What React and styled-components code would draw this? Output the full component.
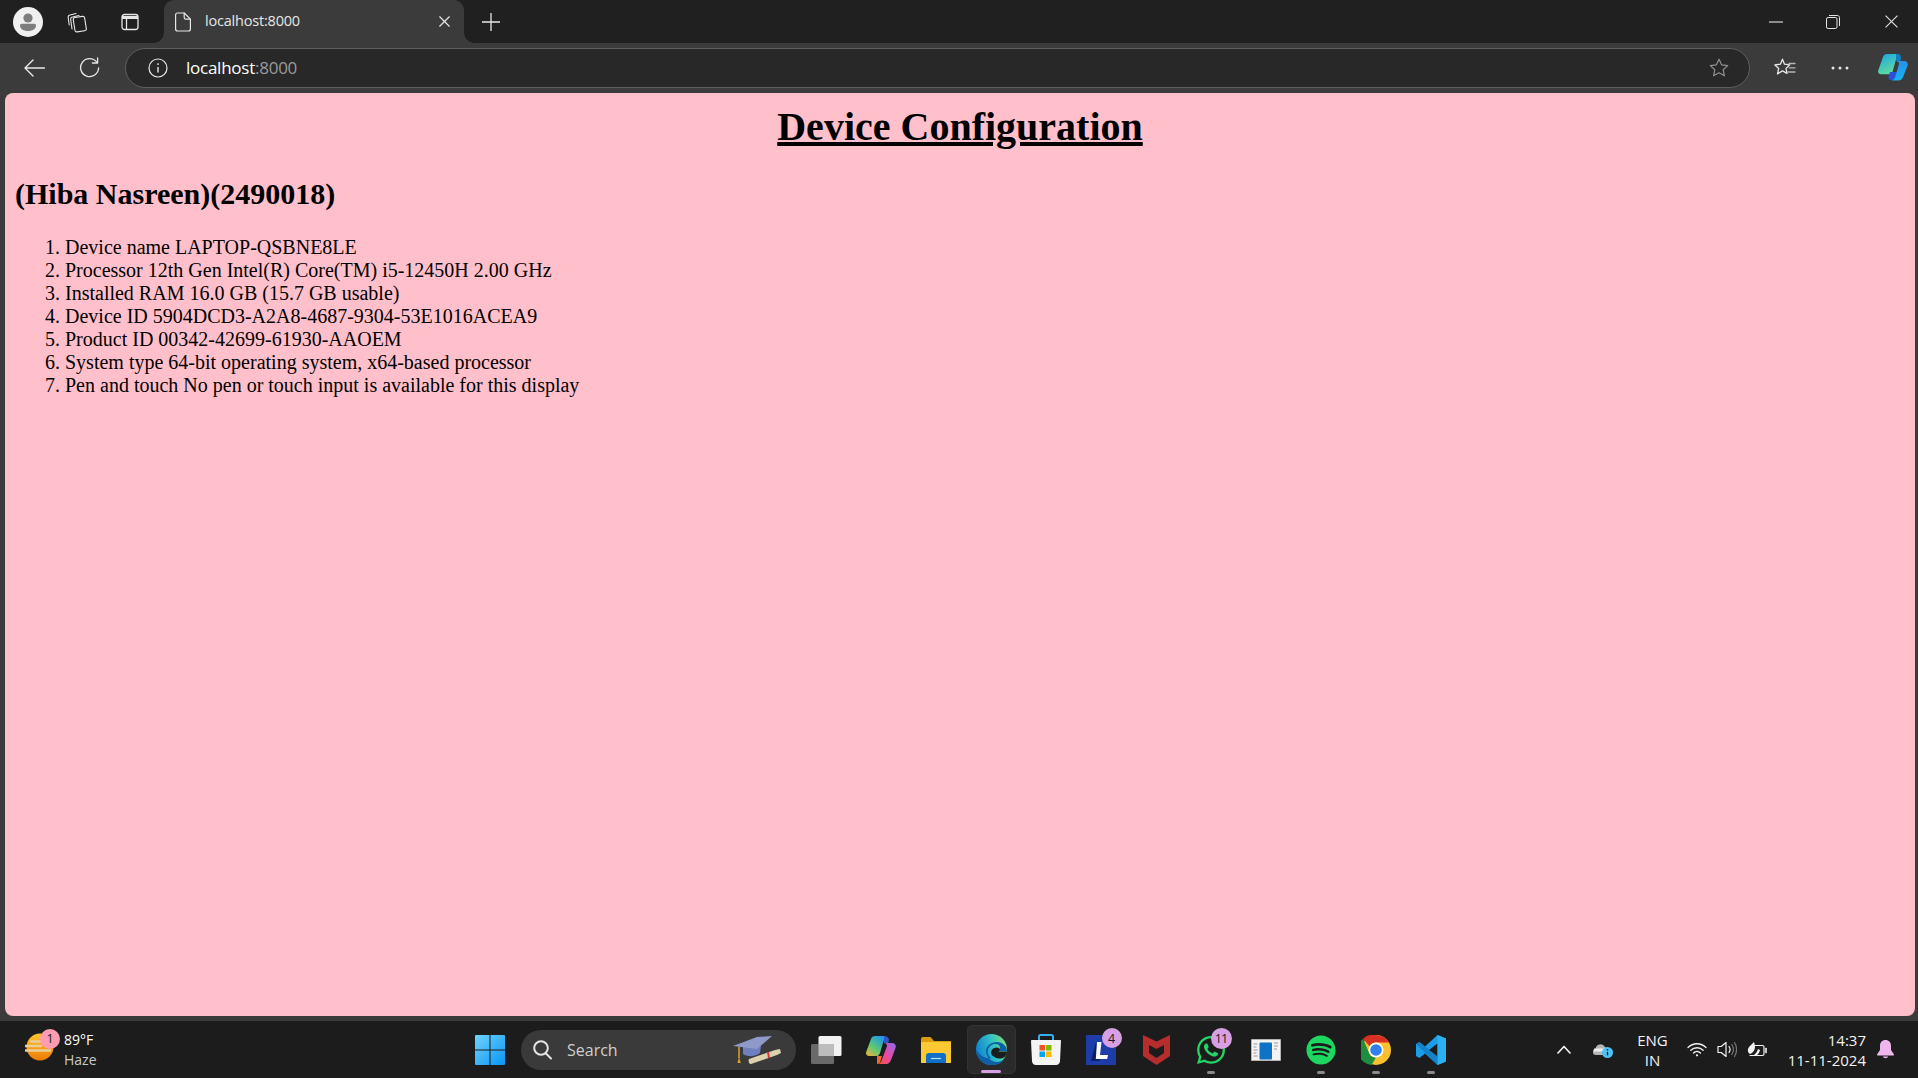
import React from "react";
import styled, { createGlobalStyle } from "styled-components";
import { FaWhatsapp, FaSpotify } from "react-icons/fa";

const GlobalStyle = createGlobalStyle`
  html, body {
    margin: 0;
    padding: 0;
    height: 100%;
    overflow: hidden;
    background: #3b3b3b;
  }
  #root {
    height: 100%;
  }
`;

const Screen = styled.div`
  width: 1918px;
  height: 1078px;
  display: flex;
  flex-direction: column;
  font-family: "Open Sans", "Noto Sans", sans-serif;
  color: #fff;
`;

const TitleBar = styled.div`
  height: 43px;
  flex: none;
  background: #202020;
  display: flex;
  align-items: center;
`;

const ChromeSlot = styled.div`
  width: ${(p) => p.$w || 53}px;
  height: 43px;
  flex: none;
  display: flex;
  align-items: center;
  justify-content: center;
`;

const Tab = styled.div`
  position: relative;
  width: 300px;
  height: 43px;
  margin-left: 3px;
  flex: none;
  background: #3b3b3b;
  border-radius: 10px 10px 0 0;
  display: flex;
  align-items: center;
  padding: 0 14px 0 11px;
  box-sizing: border-box;
  font-size: 14.5px;
  letter-spacing: -0.2px;
  color: #e6e6e6;

  &::before,
  &::after {
    content: "";
    position: absolute;
    bottom: 0;
    width: 10px;
    height: 10px;
  }
  &::before {
    left: -10px;
    background: radial-gradient(circle at 0 0, #202020 9.5px, #3b3b3b 10px);
  }
  &::after {
    right: -10px;
    background: radial-gradient(circle at 100% 0, #202020 9.5px, #3b3b3b 10px);
  }
`;

const TabTitle = styled.span`
  flex: 1;
  margin-left: 13px;
  padding-bottom: 3px;
`;

const WindowControls = styled.div`
  margin-left: auto;
  display: flex;
`;

const ControlSlot = styled.div`
  width: ${(p) => p.$w || 57}px;
  height: 43px;
  margin-left: ${(p) => p.$ml || 0}px;
  display: flex;
  align-items: center;
  justify-content: center;
`;

const ToolBar = styled.div`
  height: 50px;
  flex: none;
  background: #3b3b3b;
  display: flex;
  align-items: center;
  padding-left: 7px;
  padding-bottom: 1px;
  box-sizing: border-box;
`;

const ToolSlot = styled.div`
  width: ${(p) => p.$w || 55}px;
  height: 40px;
  flex: none;
  display: flex;
  align-items: center;
  justify-content: center;
`;

const UrlBar = styled.div`
  width: 1625px;
  height: 40px;
  margin-left: 8px;
  margin-right: 7px;
  flex: none;
  box-sizing: border-box;
  background: #282828;
  border: 1px solid #5f5f5f;
  border-radius: 20px;
  display: flex;
  align-items: center;
  padding: 0 20px 0 22px;
`;

const UrlText = styled.div`
  flex: 1;
  margin-left: 18px;
  font-size: 17px;
  letter-spacing: -0.25px;
  color: #fff;

  span {
    color: #9a9a9a;
  }
`;

const PageFrame = styled.div`
  flex: 1;
  min-height: 0;
  padding: 0 3px 5px 5px;
  background: #3b3b3b;
  display: flex;
`;

const Page = styled.main`
  flex: 1;
  background: #ffc0cb;
  border-radius: 8px;
  padding: 11px 10px 10px;
  font-family: "Liberation Serif", "Times New Roman", serif;
  font-size: 20px;
  line-height: 23px;
  color: #000;
`;

const Title = styled.h1`
  margin: 0;
  font-size: 40px;
  line-height: 46px;
  font-weight: bold;
  text-align: center;
  text-decoration: underline;
`;

const Owner = styled.h2`
  margin: 27px 0 25px;
  font-size: 30px;
  line-height: 34px;
  font-weight: bold;
`;

const SpecList = styled.ol`
  margin: 0;
  padding-left: 50px;
`;

const TaskBar = styled.footer`
  height: 57px;
  flex: none;
  background: #1c1c1c;
  display: flex;
  align-items: center;
  position: relative;
`;

const Weather = styled.div`
  width: 462px;
  flex: none;
  display: flex;
  align-items: center;
  padding-left: 25px;
  box-sizing: border-box;
`;

const WeatherIcon = styled.div`
  position: relative;
  width: 34px;
  height: 36px;
  flex: none;
`;

const CountBadge = styled.span`
  position: absolute;
  top: ${(p) => p.$top}px;
  right: ${(p) => p.$right}px;
  width: ${(p) => p.$size}px;
  height: ${(p) => p.$size}px;
  border-radius: 50%;
  background: ${(p) => p.$bg};
  color: #1a1a1a;
  font-size: 12.5px;
  letter-spacing: ${(p) => p.$spacing || 0}px;
  display: flex;
  align-items: center;
  justify-content: center;
`;

const WeatherText = styled.div`
  margin-left: 5px;
  font-size: 14px;
  line-height: 20px;
  color: #fff;

  small {
    display: block;
    font-size: 14px;
    color: #c9c9c9;
  }
`;

const StartSlot = styled.div`
  width: 55px;
  height: 48px;
  flex: none;
  display: flex;
  align-items: center;
  justify-content: center;
`;

const SearchBox = styled.div`
  width: 275px;
  height: 40px;
  margin-left: 4px;
  flex: none;
  background: #3a3a3a;
  border-radius: 20px;
  box-sizing: border-box;
  display: flex;
  align-items: center;
  padding: 0 15px 0 12px;
  font-size: 16px;
  color: #cfcfcf;
`;

const SearchLabel = styled.span`
  flex: 1;
  margin-left: 15px;
`;

const AppRow = styled.div`
  display: flex;
  margin-left: 2.5px;
`;

const AppSlot = styled.div`
  position: relative;
  width: 55px;
  height: 49px;
  flex: none;
  display: flex;
  align-items: center;
  justify-content: center;
  border-radius: 5px;
  box-sizing: border-box;
  background: ${(p) => (p.$active ? "#2a2a2a" : "transparent")};
  ${(p) => (p.$active ? "border: 1px solid #333; margin: 0 3px; width: 49px;" : "")}
`;

const RunningDot = styled.span`
  position: absolute;
  bottom: 0;
  left: 50%;
  transform: translateX(-50%);
  width: ${(p) => (p.$active ? 20 : 8)}px;
  height: 3px;
  border-radius: 2px;
  background: ${(p) => (p.$active ? "#d8a0e4" : "#8b8b8b")};
`;

const Tray = styled.div`
  margin-left: auto;
  display: flex;
  align-items: center;
  height: 100%;
`;

const TraySlot = styled.div`
  width: ${(p) => p.$w}px;
  flex: none;
  display: flex;
  align-items: center;
  justify-content: center;
`;

const TrayText = styled.div`
  font-size: 15px;
  line-height: 20px;
  text-align: ${(p) => p.$align || "center"};
  color: #f2f2f2;
  flex: none;
  width: ${(p) => p.$w}px;
`;

const line = { fill: "none", stroke: "currentColor", strokeLinecap: "round", strokeLinejoin: "round" };

const Profile = () => (
  <svg width="30" height="30" viewBox="0 0 30 30">
    <circle cx="15" cy="15" r="15" fill="#f0f0f0" />
    <circle cx="15" cy="11" r="4.6" fill="#7d7d7d" />
    <path d="M7 18.5c0-1 .8-1.8 1.8-1.8h12.4c1 0 1.8.8 1.8 1.8 0 3.4-3.4 5.5-8 5.5s-8-2.1-8-5.5z" fill="#7d7d7d" />
  </svg>
);

const Collections = () => (
  <svg width="22" height="22" viewBox="0 0 22 22" {...line} color="#e6e6e6" strokeWidth="1.1">
    <rect x="8" y="6" width="11.5" height="14.5" rx="2" transform="rotate(-9 13 13)" />
    <path d="M6 18 4.700 8.500c-.2-1.200.6-2.300 1.800-2.500l6.500-1.500" />
    <path d="M3.200 14 2.200 6.500C2 5.300 2.800 4.200 4 4l6-1.500" />
  </svg>
);

const TabLayout = () => (
  <svg width="18" height="18" viewBox="0 0 18 18" fill="none" stroke="#e6e6e6" strokeWidth="1.3">
    <rect x="1" y="1.5" width="16" height="15" rx="2.5" />
    <path d="M1 4.5h16" strokeWidth="3" />
    <path d="M5.5 5v11" />
  </svg>
);

const FileIcon = () => (
  <svg width="17" height="20" viewBox="0 0 17 20" {...line} color="#e6e6e6" strokeWidth="1.2">
    <path d="M2.6 1h6.6l6.2 6.2v9.8c0 1.1-.9 2-2 2H2.6c-1.1 0-2-.9-2-2V3c0-1.1.9-2 2-2z" />
    <path d="M9.2 1v4.4c0 1 .8 1.8 1.8 1.8h4.4" />
  </svg>
);

const Cross = ({ size = 12, width = 1.3, color = "#e6e6e6" }) => (
  <svg width={size} height={size} viewBox="0 0 12 12" fill="none" stroke={color} strokeWidth={width}>
    <path d="M.5.5l11 11M11.5.5l-11 11" />
  </svg>
);

const Plus = () => (
  <svg width="18" height="18" viewBox="0 0 18 18" fill="none" stroke="#e6e6e6" strokeWidth="1.3">
    <path d="M9 0v18M0 9h18" />
  </svg>
);

const Minimize = () => (
  <svg width="14" height="2" viewBox="0 0 14 2">
    <path d="M0 1h14" stroke="#e6e6e6" strokeWidth="1.1" />
  </svg>
);

const Restore = () => (
  <svg width="14" height="14" viewBox="0 0 14 14" fill="none" stroke="#e6e6e6" strokeWidth="1">
    <rect x=".5" y="2.5" width="10.5" height="11" rx="1.6" />
    <path d="M3 .5h8.4c1.2 0 2.1.9 2.1 2.1V11" />
  </svg>
);

const Back = () => (
  <svg width="21" height="18" viewBox="0 0 21 18" {...line} color="#e8e8e8" strokeWidth="1.4">
    <path d="M1 9h19.5M9 1 1 9l8 8" />
  </svg>
);

const Reload = () => (
  <svg width="21" height="21" viewBox="0 0 21 21" {...line} color="#e8e8e8" strokeWidth="1.3">
    <path d="M17.8 5.2A9 9 0 1 0 19.6 11" />
    <path d="M18.6 .8v5.2h-5.2" />
  </svg>
);

const Info = () => (
  <svg width="20" height="20" viewBox="0 0 20 20" fill="none" stroke="#e8e8e8" strokeWidth="1.2">
    <circle cx="10" cy="10" r="9" />
    <path d="M10 9v5.4" strokeWidth="1.4" />
    <circle cx="10" cy="6.1" r=".9" fill="#e8e8e8" stroke="none" />
  </svg>
);

const Star = () => (
  <svg width="20" height="20" viewBox="0 0 20 20" {...line} color="#909090" strokeWidth="1.2">
    <path d="M10 1.2l2.6 5.6 6.1.8-4.5 4.2 1.2 6-5.4-3-5.4 3 1.2-6L1.300 7.600l6.100-.8z" />
  </svg>
);

const Favorites = () => (
  <svg width="22" height="20" viewBox="0 0 22 20" {...line} color="#e8e8e8" strokeWidth="1.3">
    <path d="M8.500 1.200l2 5 5.300.6-3.800 3.600 1 5-4.500-2.500-5 3 1.200-5.500L.900 6.900l5.500-.7z" />
    <path d="M15 5.500h6M15 9.800h6M14 14h7" stroke="#b5b5b5" />
  </svg>
);

const Dots = () => (
  <svg width="18" height="4" viewBox="0 0 18 4" fill="#e8e8e8">
    <circle cx="2" cy="2" r="1.500" />
    <circle cx="9" cy="2" r="1.500" />
    <circle cx="16" cy="2" r="1.500" />
  </svg>
);

const CopilotEdge = () => (
  <svg width="30" height="27" viewBox="0 0 30 27">
    <defs>
      <linearGradient id="ceA" x1="0" y1="0" x2="0.4" y2="1">
        <stop offset="0" stopColor="#1aa6e8" />
        <stop offset="1" stopColor="#5ed8a0" />
      </linearGradient>
      <linearGradient id="ceB" x1="0.5" y1="0" x2="0.5" y2="1">
        <stop offset="0" stopColor="#2a8fe8" />
        <stop offset="1" stopColor="#16b4ee" />
      </linearGradient>
    </defs>
    <path d="M9 0h10.500l-5 18c-.4 1.300-1.500 2.200-2.900 2.200H3C.9 20.200-.5 18.400.2 16.400L5 3C5.600 1.200 7.100 0 9 0z" fill="url(#ceA)" />
    <path d="M12 18l-1.500 4.500C10 24.500 11.500 26 13 26h4l2-8z" fill="#2a4fd8" />
    <path d="M18 7h8c3 0 4.500 2.500 3.500 5l-4.500 11c-.8 2-2.300 3.500-4.500 3.500H13c2.300 0 3.600-1.600 4.200-3.500L21 10c.3-1.200-1-3-3-3z" fill="url(#ceB)" />
    <path d="M18 0h1.500c2.300 0 3.600 1.400 3.500 3.500L22.500 7H18z" fill="#0f7fbd" />
  </svg>
);

const WeatherGlyph = () => (
  <svg width="30" height="30" viewBox="0 0 30 30">
    <defs>
      <linearGradient id="sun" x1="0" y1="0" x2="0" y2="1">
        <stop offset="0" stopColor="#ffc42e" />
        <stop offset="1" stopColor="#ee7b06" />
      </linearGradient>
    </defs>
    <circle cx="15" cy="15" r="13.500" fill="url(#sun)" />
    <g stroke="#e8cf9a" strokeWidth="2.400" strokeLinecap="round">
      <path d="M6 9.500h21M0 14h16M21 14h6M0 18.500h25" />
    </g>
  </svg>
);

const WinLogo = () => (
  <svg width="30" height="30" viewBox="0 0 30 30">
    <defs>
      <linearGradient id="win" x1="0" y1="0" x2="1" y2="1">
        <stop offset="0" stopColor="#6fd3ff" />
        <stop offset="1" stopColor="#0a94f5" />
      </linearGradient>
    </defs>
    <path d="M1 0h13.500v14.500H0V1a1 1 0 0 1 1-1zM15.500 0H29a1 1 0 0 1 1 1v13.500H15.500zM0 15.500h14.500V30H1a1 1 0 0 1-1-1zM15.500 15.500H30V29a1 1 0 0 1-1 1H15.500z" fill="url(#win)" />
  </svg>
);

const SearchGlyph = () => (
  <svg width="19" height="20" viewBox="0 0 19 20" {...line} color="#e4e4e4" strokeWidth="2">
    <circle cx="8" cy="8" r="6.800" />
    <path d="M13 13.500l5 5" />
  </svg>
);

const GradCap = () => (
  <svg width="48" height="30" viewBox="0 0 48 30">
    <path d="M10 12v7c4 3 12 3 17-1l1-7z" fill="#6f7fc0" />
    <path d="M0 11 24 2l15-1-15 13z" fill="#8f9ac8" />
    <path d="M6 12v11" stroke="#d9a42e" strokeWidth="1.500" />
    <path d="M4.500 28l1.500-6 1.800 6z" fill="#d9a42e" />
    <path d="M16 24l26-9 5-1 1 4-4 2-26 9c-2 .4-3-3-2-5z" fill="#dcd0ae" />
    <path d="M35 17l1 6" stroke="#d83838" strokeWidth="2" />
  </svg>
);

const TaskView = () => (
  <svg width="31" height="28" viewBox="0 0 31 28">
    <rect x="7.500" y="0" width="23" height="20" rx="1.500" fill="#f2f2f2" />
    <rect x="0" y="8" width="23" height="20" rx="1.500" fill="#6a6a6a" />
    <rect x="7.500" y="8" width="15.500" height="12" fill="#bdbdbd" />
  </svg>
);

const CopilotColor = () => (
  <svg width="30" height="28" viewBox="0 0 30 28">
    <defs>
      <linearGradient id="ccA" x1="0" y1="1" x2="0.7" y2="0">
        <stop offset="0" stopColor="#f5b43a" />
        <stop offset="0.5" stopColor="#58c878" />
        <stop offset="1" stopColor="#1e9ae8" />
      </linearGradient>
      <linearGradient id="ccB" x1="0" y1="1" x2="1" y2="0">
        <stop offset="0" stopColor="#f4553a" />
        <stop offset="0.5" stopColor="#e64aa8" />
        <stop offset="1" stopColor="#8a6af0" />
      </linearGradient>
    </defs>
    <path d="M9 0h10l-5 17c-.4 1.400-1.500 3-3 3H3c-2 0-3.500-2-2.800-4L5 3C5.600 1.200 7.100 0 9 0z" fill="url(#ccA)" />
    <path d="M18 7h8c3 0 4.500 2.500 3.500 5L25 24c-.8 2-2.300 4-4.500 4H11c2.300 0 4-1.600 4.600-3.500L21 10c.3-1.200-1-3-3-3z" fill="url(#ccB)" />
    <path d="M11 20h5l-1.500 5c-.5 1.700-2 3-3.500 3z" fill="#f2682e" />
    <path d="M18 0c3 0 5 2 5 4l-.8 3H18z" fill="#3258c8" />
  </svg>
);

const Folder = () => (
  <svg width="30" height="26" viewBox="0 0 30 26">
    <path d="M0 2a2 2 0 0 1 2-2h7.500l3.500 4h17v6H0z" fill="#dc9e0c" />
    <path d="M0 5h30v21H0z" fill="#fcc933" />
    <path d="M5 26V19a3 3 0 0 1 3-3h14a3 3 0 0 1 3 3v7z" fill="#1070c8" />
    <path d="M10 21.500h10" stroke="#b8dcf4" strokeWidth="1.200" />
  </svg>
);

const EdgeLogo = () => (
  <svg width="31" height="31" viewBox="0 0 31 31">
    <defs>
      <linearGradient id="edA" x1="0" y1="0.6" x2="1" y2="0.3">
        <stop offset="0" stopColor="#0f7fd0" />
        <stop offset="0.55" stopColor="#2fc0c8" />
        <stop offset="1" stopColor="#7ce07a" />
      </linearGradient>
    </defs>
    <circle cx="15.500" cy="15.500" r="15.500" fill="url(#edA)" />
    <path d="M31 17c0-5-4.500-9-10-9-6 0-11 4-11 9 0 6 5 11 11 11 2.500 0 5-.9 7-2.500-1.500 3-6 5.500-12 5.500C7 31 0 24 0 15.500 4 22 10 25 15 24c-3-2-4-5-3-8.500 1-3 4-5.500 7-5.500 3.500 0 5 1.500 5 4 0 1.500-.8 2.500-2 3h9z" fill="#0d5fa8" />
    <path d="M19 23c-3.500-1-4.500-4-3.500-6.500 1-2 3-3 5-3s3 .8 3.500 2c-.2 1-1 1.500-1.500 2H31c0 2-1 4-2.500 5.500-3 2-6.500 2-9.500.5z" fill="#1c1c1c" />
  </svg>
);

const StoreLogo = () => (
  <svg width="30" height="31" viewBox="0 0 30 31">
    <path d="M8 6V2.500C8 1.500 8.800 1 9.500 1h11c.7 0 1.500.5 1.500 1.500V6" fill="none" stroke="#35b0e8" strokeWidth="2" />
    <path d="M1 6h28c.6 0 1 .4 1 1l-1 20c0 2-1.500 4-4 4H5c-2.500 0-4-2-4-4L0 7c0-.6.4-1 1-1z" fill="#f4f4f4" />
    <rect x="8.500" y="11" width="5.500" height="5.500" fill="#f25022" />
    <rect x="15" y="11" width="5.500" height="5.500" fill="#7fba00" />
    <rect x="8.500" y="17.500" width="5.500" height="5.500" fill="#00a4ef" />
    <rect x="15" y="17.500" width="5.500" height="5.500" fill="#ffb900" />
  </svg>
);

const LearnLogo = () => (
  <svg width="30" height="30" viewBox="0 0 30 30">
    <rect width="30" height="30" fill="#1e3ca8" />
    <path d="M10 7 5 26h8l2-3z" fill="#0c1f66" />
    <path d="M11 7h4.500l-1.500 13h8l-.8 4H9.800z" fill="#fff" />
  </svg>
);

const McAfee = () => (
  <svg width="27" height="30" viewBox="0 0 27 30">
    <path d="M0 0l13.500 6.500L27 0v21l-13.500 9L0 21zM6 10v8l7.500 5 7.500-5v-8l-7.500 4z" fill="#b62d2d" fillRule="evenodd" />
  </svg>
);

const ThreatApp = () => (
  <svg width="30" height="22" viewBox="0 0 30 22">
    <rect width="30" height="22" fill="#f3f3f3" stroke="#777" />
    <rect x="8.500" y="3.500" width="12.500" height="17" rx="1" fill="#0f72c4" />
    <path d="M2.500 5h4M2.500 8h3M2.500 11h4M2.500 14h3M2.500 17h4M23 4h4M23 7h4M23 10h3" stroke="#9a9a9a" strokeWidth="1.100" />
  </svg>
);

const ChromeLogo = () => (
  <svg width="30" height="30" viewBox="0 0 30 30">
    <circle cx="15" cy="15" r="15" fill="#fbc02d" />
    <path d="M15 0a15 15 0 0 1 13 7.500H15a7.500 7.500 0 0 0-6.500 3.750L2 3.700A15 15 0 0 1 15 0z" fill="#d93025" />
    <path d="M2 3.700 8.500 18.750A7.500 7.500 0 0 0 15 22.500L10.500 30A15 15 0 0 1 2 3.700z" fill="#1e8e3e" />
    <circle cx="15" cy="15" r="7.500" fill="#fff" />
    <circle cx="15" cy="15" r="5.800" fill="#2f7fed" />
  </svg>
);

const VsCode = () => (
  <svg width="30" height="30" viewBox="0 0 30 30">
    <path d="M21.500 0 30 3.500v23L21.500 30 9 18.500 3.500 23 0 21V9l3.500-2L9 11.500zM21.500 8.500 13 15l8.500 6.500z" fill="#1a9ee8" fillRule="evenodd" />
    <path d="M21.500 0 30 3.500v23L21.500 30z" fill="#2bb0f2" />
    <path d="M3.500 7 21.500 21.500V30L0 9z" fill="#0f6fb8" opacity="0.6" />
  </svg>
);

const CloudInfo = () => (
  <svg width="20" height="16" viewBox="0 0 20 16">
    <path d="M3 13a3 3 0 0 1-.4-6A5 5 0 0 1 12 5a3.500 3.500 0 0 1 3 3v5z" fill="#b5b5b5" />
    <path d="M1 8h11" stroke="#eee" strokeWidth="3" />
    <circle cx="14.500" cy="10.500" r="5.500" fill="#4fc3f7" />
    <path d="M14.500 9.800v3.500" stroke="#111" strokeWidth="1.300" />
    <circle cx="14.500" cy="7.800" r=".8" fill="#111" />
  </svg>
);

const Chevron = () => (
  <svg width="14" height="9" viewBox="0 0 14 9" {...line} color="#eee" strokeWidth="1.700">
    <path d="M1 8l6-6.500L13 8" />
  </svg>
);

const Wifi = () => (
  <svg width="20" height="15" viewBox="0 0 20 15" {...line} color="#f2f2f2" strokeWidth="1.300">
    <path d="M1 5.500c5-5 13-5 18 0M3.800 8.300c3.500-3.400 9-3.400 12.400 0M6.500 11c2-2 5-2 7 0" />
    <circle cx="10" cy="13.300" r="1.100" fill="#f2f2f2" stroke="none" />
  </svg>
);

const Volume = () => (
  <svg width="20" height="17" viewBox="0 0 20 17" {...line} color="#f2f2f2" strokeWidth="1.200">
    <path d="M1 5.500h3.200L9 1.500v14l-4.800-4H1z" />
    <path d="M12 5.500c1.300 1.800 1.300 4.200 0 6" />
    <path d="M14.800 3.500c2 3 2 7 0 10M17.500 1.500c2.700 4 2.700 10 0 14" stroke="#777" />
  </svg>
);

const Battery = () => (
  <svg width="21" height="17" viewBox="0 0 21 17" {...line} color="#f2f2f2" strokeWidth="1.200">
    <path d="M8 4.500h8.500c.8 0 1.500.7 1.500 1.500v7c0 .8-.7 1.500-1.500 1.500H4" />
    <path d="M20 7.500v4" strokeWidth="1.600" />
    <path d="M4 13c-3-2-3-6 1-9l3-3c1 3 2 7-1 10-1 1-2 1.500-3 2z" fill="#f2f2f2" stroke="none" />
    <path d="M8 14c2-2 3-3 4-6l2 1c-.5 2-1.500 4-3 5z" fill="#f2f2f2" stroke="none" />
  </svg>
);

const Bell = () => (
  <svg width="17" height="19" viewBox="0 0 17 19" fill="#efb6ee">
    <path d="M8.500 0C5 0 3 2.500 3 6v4l-3 4.500c0 .5.200 1 1 1h15c.8 0 1-.5 1-1L14 10V6c0-3.500-2-6-5.500-6z" />
    <path d="M5.800 16.500a2.800 2.300 0 0 0 5.400 0z" />
  </svg>
);

const specs = [
  "Device name LAPTOP-QSBNE8LE",
  "Processor 12th Gen Intel(R) Core(TM) i5-12450H 2.00 GHz",
  "Installed RAM 16.0 GB (15.7 GB usable)",
  "Device ID 5904DCD3-A2A8-4687-9304-53E1016ACEA9",
  "Product ID 00342-42699-61930-AAOEM",
  "System type 64-bit operating system, x64-based processor",
  "Pen and touch No pen or touch input is available for this display",
];

const apps = [
  { key: "taskview", icon: <TaskView /> },
  { key: "copilot", icon: <CopilotColor /> },
  { key: "files", icon: <Folder /> },
  { key: "edge", icon: <EdgeLogo />, active: true },
  { key: "store", icon: <StoreLogo /> },
  {
    key: "learn",
    icon: <LearnLogo />,
    badge: { text: "4", size: 20, top: 3, right: 7, bg: "#d8a0e4" },
  },
  { key: "mcafee", icon: <McAfee /> },
  {
    key: "whatsapp",
    icon: <FaWhatsapp size={32} color="#25d366" />,
    running: true,
    badge: { text: "11", size: 21, top: 3, right: 7, bg: "#d8a0e4", spacing: -1 },
  },
  { key: "threat", icon: <ThreatApp /> },
  { key: "spotify", icon: <FaSpotify size={30} color="#1ed760" />, running: true },
  { key: "chrome", icon: <ChromeLogo />, running: true },
  { key: "vscode", icon: <VsCode />, running: true },
];

const App = () => {
  return (
    <Screen>
      <GlobalStyle />
      <TitleBar>
        <ChromeSlot $w={55}>
          <Profile />
        </ChromeSlot>
        <ChromeSlot $w={44}>
          <Collections />
        </ChromeSlot>
        <ChromeSlot $w={62}>
          <TabLayout />
        </ChromeSlot>
        <Tab>
          <FileIcon />
          <TabTitle>localhost:8000</TabTitle>
          <Cross size={11} />
        </Tab>
        <ChromeSlot $w={54}>
          <Plus />
        </ChromeSlot>
        <WindowControls>
          <ControlSlot>
            <Minimize />
          </ControlSlot>
          <ControlSlot>
            <Restore />
          </ControlSlot>
          <ControlSlot $w={54} $ml={3}>
            <Cross size={13} width={1} />
          </ControlSlot>
        </WindowControls>
      </TitleBar>

      <ToolBar>
        <ToolSlot>
          <Back />
        </ToolSlot>
        <ToolSlot>
          <Reload />
        </ToolSlot>
        <UrlBar>
          <Info />
          <UrlText>
            localhost<span>:8000</span>
          </UrlText>
          <Star />
        </UrlBar>
        <ToolSlot>
          <Favorites />
        </ToolSlot>
        <ToolSlot>
          <Dots />
        </ToolSlot>
        <ToolSlot $w={52}>
          <CopilotEdge />
        </ToolSlot>
      </ToolBar>

      <PageFrame>
        <Page>
          <Title>Device Configuration</Title>
          <Owner>(Hiba Nasreen)(2490018)</Owner>
          <SpecList>
            {specs.map((spec) => (
              <li key={spec}>{spec}</li>
            ))}
          </SpecList>
        </Page>
      </PageFrame>

      <TaskBar>
        <Weather>
          <WeatherIcon>
            <WeatherGlyph />
            <CountBadge $top={-3} $right={-1} $size={20} $bg="#ff9cb0">
              1
            </CountBadge>
          </WeatherIcon>
          <WeatherText>
            89°F
            <small>Haze</small>
          </WeatherText>
        </Weather>
        <StartSlot>
          <WinLogo />
        </StartSlot>
        <SearchBox>
          <SearchGlyph />
          <SearchLabel>Search</SearchLabel>
          <GradCap />
        </SearchBox>
        <AppRow>
          {apps.map((app) => (
            <AppSlot key={app.key} $active={app.active}>
              {app.icon}
              {app.badge && (
                <CountBadge
                  $top={app.badge.top}
                  $right={app.badge.right}
                  $size={app.badge.size}
                  $bg={app.badge.bg}
                  $spacing={app.badge.spacing}
                >
                  {app.badge.text}
                </CountBadge>
              )}
              {(app.active || app.running) && <RunningDot $active={app.active} />}
            </AppSlot>
          ))}
        </AppRow>
        <Tray>
          <TraySlot $w={38}>
            <Chevron />
          </TraySlot>
          <TraySlot $w={40}>
            <CloudInfo />
          </TraySlot>
          <TrayText $w={59}>
            ENG
            <br />
            IN
          </TrayText>
          <TraySlot $w={30}>
            <Wifi />
          </TraySlot>
          <TraySlot $w={29}>
            <Volume />
          </TraySlot>
          <TraySlot $w={31}>
            <Battery />
          </TraySlot>
          <TrayText $w={94} $align="right">
            14:37
            <br />
            11-11-2024
          </TrayText>
          <TraySlot $w={39}>
            <Bell />
          </TraySlot>
          <TraySlot $w={13} />
        </Tray>
      </TaskBar>
    </Screen>
  );
};

export default App;
